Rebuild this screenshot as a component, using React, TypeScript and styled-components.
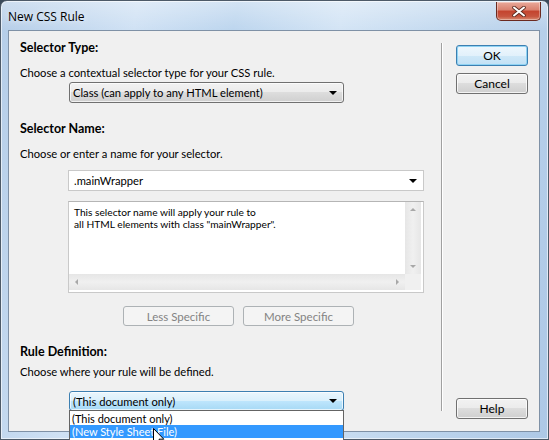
import React from 'react'
import styled, { createGlobalStyle, css } from 'styled-components'

const GlobalStyle = createGlobalStyle`
  html, body {
    margin: 0;
    padding: 0;
    overflow: hidden;
    background: #3a4a5a;
  }
  body {
    font-family: Lato, "Open Sans", sans-serif;
    font-size: 11px;
    color: #000;
  }
`

const Frame = styled.div`
  position: relative;
  width: 549px;
  height: 440px;
  box-sizing: border-box;
  padding: 0 8px 7px 7px;
  display: flex;
  flex-direction: column;
  border: 1px solid #4d5a68;
  border-radius: 7px 7px 0 0;
  background:
    linear-gradient(180deg, rgba(255, 255, 255, 0.35), rgba(255, 255, 255, 0) 30px),
    linear-gradient(100deg, #b4cde8 0%, #cfe1f4 22%, #bcd5ee 38%, #d3e4f5 55%, #c0d7ee 75%, #adc8e6 100%);
  box-shadow: inset 0 0 0 1px rgba(255, 255, 255, 0.6);
`

const TitleBar = styled.div`
  height: 29px;
  display: flex;
  align-items: center;
`

const Title = styled.span`
  font-family: "Open Sans", Lato, sans-serif;
  font-size: 12px;
  color: #000;
  padding-top: 2px;
  text-shadow: 0 0 6px rgba(255, 255, 255, 0.9);
`

const CloseButton = styled.div`
  position: absolute;
  top: 1px;
  right: 7px;
  width: 45px;
  height: 19px;
  box-sizing: border-box;
  border: 1px solid #6b2a20;
  border-top: none;
  border-radius: 0 0 5px 5px;
  background: linear-gradient(180deg, #e9a99a 0%, #d9806e 45%, #c4432e 50%, #c7553f 80%, #d98d73 100%);
  box-shadow: inset 0 0 0 1px rgba(255, 255, 255, 0.35);
  display: flex;
  align-items: center;
  justify-content: center;
`

const Client = styled.div`
  flex: 1;
  display: flex;
  background: #f0f0f0;
  border: 1px solid #7f91a6;
`

const Main = styled.div`
  width: 432px;
  padding-left: 11px;
  box-sizing: border-box;
  display: flex;
  flex-direction: column;
  align-items: flex-start;
`

const Heading = styled.div<{ $top: number }>`
  margin-top: ${(p) => p.$top}px;
  font-weight: bold;
  font-size: 12.5px;
  line-height: 14px;
`

const Hint = styled.div<{ $top: number }>`
  margin-top: ${(p) => p.$top}px;
  font-size: 11.2px;
  line-height: 14px;
`

const Arrow = styled.span`
  width: 0;
  height: 0;
  border-left: 4px solid transparent;
  border-right: 4px solid transparent;
  border-top: 4px solid #000;
`

const SelectBox = styled.div<{ $top: number; $focus?: boolean }>`
  position: relative;
  margin: ${(p) => p.$top}px 0 0 49px;
  width: 275px;
  height: ${(p) => (p.$focus ? 20 : 21)}px;
  box-sizing: border-box;
  padding: 0 6px 0 3px;
  display: flex;
  align-items: center;
  justify-content: space-between;
  font-size: 11.2px;
  border-radius: 3px;
  ${(p) =>
    p.$focus
      ? css`
          border: 1px solid #3c7fb1;
          background: linear-gradient(180deg, #eaf6fd 0%, #d9f0fc 50%, #bee6fd 50%, #a7d9f5 100%);
        `
      : css`
          border: 1px solid #707070;
          background: linear-gradient(180deg, #f2f2f2 0%, #ebebeb 50%, #dddddd 50%, #cfcfcf 100%);
        `}
  box-shadow: inset 0 0 0 1px rgba(255, 255, 255, 0.7);
`

const DropList = styled.div`
  position: absolute;
  top: 100%;
  left: -1px;
  right: -1px;
  height: 40px;
  background: #fff;
  border: 1px solid #646464;
  box-sizing: border-box;
  padding-top: 1px;
  z-index: 2;
`

const DropItem = styled.div<{ $active?: boolean }>`
  height: 13px;
  line-height: 13px;
  padding-left: 2px;
  font-size: 11px;
  color: ${(p) => (p.$active ? '#fff' : '#000')};
  background: ${(p) => (p.$active ? '#3399ff' : 'transparent')};
`

const Combo = styled.div`
  margin: 9px 0 0 48px;
  width: 356px;
  height: 21px;
  box-sizing: border-box;
  border: 1px solid #c9c9c9;
  background: #fff;
  display: flex;
  align-items: center;
  justify-content: space-between;
  padding: 0 6px 0 5px;
  font-size: 11.2px;
`

const Memo = styled.div`
  margin: 10px 0 0 48px;
  width: 356px;
  height: 92px;
  box-sizing: border-box;
  border: 1px solid #c9c9c9;
  border-top-color: #b5b5b5;
  background: #fff;
  display: grid;
  grid-template-columns: 1fr 16px;
  grid-template-rows: 1fr 16px;
  padding: 0 2px 2px 0;
`

const MemoText = styled.div`
  padding: 4px 0 0 5px;
  line-height: 12px;
  font-size: 10.2px;
`

const ScrollV = styled.div`
  background: linear-gradient(90deg, #e6e6e6, #f0f0f0 50%, #e6e6e6);
  display: flex;
  flex-direction: column;
  justify-content: space-between;
  align-items: center;
  padding: 6px 0;
`

const ScrollH = styled.div`
  background: linear-gradient(180deg, #e6e6e6, #f0f0f0 50%, #e6e6e6);
  display: flex;
  justify-content: space-between;
  align-items: center;
  padding: 0 6px;
`

const Corner = styled.div`
  background: #f0f0f0;
`

const Tri = styled.span<{ $dir: 'up' | 'down' | 'left' | 'right' }>`
  width: 0;
  height: 0;
  border: 3px solid transparent;
  ${(p) => p.$dir === 'up' && css`border-bottom: 3px solid #a8a8a8; border-top: none;`}
  ${(p) => p.$dir === 'down' && css`border-top: 3px solid #a8a8a8; border-bottom: none;`}
  ${(p) => p.$dir === 'left' && css`border-right: 3px solid #a8a8a8; border-left: none;`}
  ${(p) => p.$dir === 'right' && css`border-left: 3px solid #a8a8a8; border-right: none;`}
`

const ButtonRow = styled.div`
  margin: 13px 0 0 103px;
  display: flex;
  gap: 9px;
`

const Button = styled.div<{ $width: number; $default?: boolean; $disabled?: boolean }>`
  width: ${(p) => p.$width}px;
  height: 21px;
  box-sizing: border-box;
  display: flex;
  align-items: center;
  justify-content: center;
  font-size: 12px;
  border-radius: 3px;
  border: 1px solid #707070;
  background: linear-gradient(180deg, #f2f2f2 0%, #ebebeb 50%, #dddddd 50%, #cfcfcf 100%);
  box-shadow: inset 0 0 0 1px rgba(255, 255, 255, 0.75);
  ${(p) =>
    p.$default &&
    css`
      border-color: #3c7fb1;
      background: linear-gradient(180deg, #eef7fd 0%, #e2f1fb 50%, #cfe8f8 50%, #c2e1f5 100%);
      box-shadow: inset 0 0 0 1px #8fd3f3;
    `}
  ${(p) =>
    p.$disabled &&
    css`
      height: 20px;
      font-size: 11.5px;
      border-color: #adb2b5;
      background: #f4f4f4;
      box-shadow: none;
      color: #838383;
    `}
`

const Divider = styled.div`
  width: 1px;
  margin: 12px 0 20px;
  background: #a0a0a0;
  border-right: 1px solid #fff;
`

const Side = styled.div`
  flex: 1;
  display: flex;
  flex-direction: column;
  padding: 14px 0 12px 13px;
  gap: 7px;
`

const Spacer = styled.div`
  flex: 1;
`

const Pointer = styled.svg`
  position: absolute;
  left: 152px;
  top: 427px;
  z-index: 3;
`

const App = () => {
  return (
    <>
      <GlobalStyle />
      <Frame>
        <TitleBar>
          <Title>New CSS Rule</Title>
        </TitleBar>
        <CloseButton>
          <svg width="14" height="11" viewBox="0 0 14 11">
            <path d="M2 1.5 L12 9.5 M12 1.5 L2 9.5" stroke="#5a2a20" strokeWidth="3.6" strokeLinecap="round" />
            <path d="M2 1.5 L12 9.5 M12 1.5 L2 9.5" stroke="#fff" strokeWidth="2" strokeLinecap="round" />
          </svg>
        </CloseButton>
        <Client>
          <Main>
            <Heading $top={10}>Selector Type:</Heading>
            <Hint $top={11}>Choose a contextual selector type for your CSS rule.</Hint>
            <SelectBox $top={2}>
              <span>Class (can apply to any HTML element)</span>
              <Arrow />
            </SelectBox>

            <Heading $top={19}>Selector Name:</Heading>
            <Hint $top={11}>Choose or enter a name for your selector.</Hint>
            <Combo>
              <span>.mainWrapper</span>
              <Arrow />
            </Combo>
            <Memo>
              <MemoText>
                This selector name will apply your rule to
                <br />
                all HTML elements with class "mainWrapper".
              </MemoText>
              <ScrollV>
                <Tri $dir="up" />
                <Tri $dir="down" />
              </ScrollV>
              <ScrollH>
                <Tri $dir="left" />
                <Tri $dir="right" />
              </ScrollH>
              <Corner />
            </Memo>
            <ButtonRow>
              <Button $width={111} $disabled>Less Specific</Button>
              <Button $width={111} $disabled>More Specific</Button>
            </ButtonRow>

            <Heading $top={19}>Rule Definition:</Heading>
            <Hint $top={6}>Choose where your rule will be defined.</Hint>
            <SelectBox $top={12} $focus>
              <span>(This document only)</span>
              <Arrow />
              <DropList>
                <DropItem>(This document only)</DropItem>
                <DropItem $active>(New Style Sheet File)</DropItem>
              </DropList>
            </SelectBox>
          </Main>
          <Divider />
          <Side>
            <Button $width={72} $default>OK</Button>
            <Button $width={72}>Cancel</Button>
            <Spacer />
            <Button $width={72}>Help</Button>
          </Side>
        </Client>
        <Pointer width="12" height="19" viewBox="0 0 12 19">
          <path d="M0.5 0.5 L0.5 15.5 L4 12 L6.5 18 L8.5 17 L6 11.2 L10.8 11.2 Z" fill="#fff" stroke="#000" strokeWidth="1" strokeLinejoin="round" />
        </Pointer>
      </Frame>
    </>
  )
}

export default App
